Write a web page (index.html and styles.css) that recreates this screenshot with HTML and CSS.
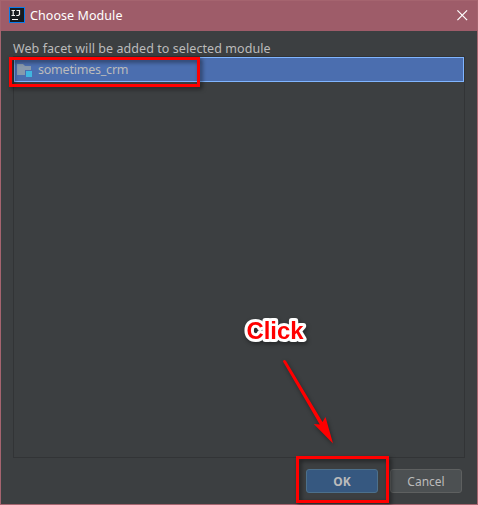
FILE: index.html
```html
<!DOCTYPE html>
<html lang="en">
<head>
<meta charset="utf-8">
<title>Choose Module</title>
<link rel="stylesheet" href="styles.css">
</head>
<body>
<div class="dialog">
  <header class="titlebar">
    <svg class="app-icon" width="16" height="16" viewBox="0 0 16 16">
      <rect x=".5" y=".5" width="15" height="15" fill="#161a1f" stroke="#087cec"/>
      <path d="M2.5 3.5H6M4.2 3.5V8.5M2.5 8.5H6M7.5 3.5H10.5V7.5L9.5 8.5H7.3M3 12.5H9" fill="none" stroke="#f2f2f2" stroke-width="1.2"/>
    </svg>
    <h1 class="title">Choose Module</h1>
    <svg class="close" width="11" height="11" viewBox="0 0 11 11"><path d="M.4.4l9.7 9.7M10.1.4L.4 10.1" stroke="#fff" stroke-width="1.2"/></svg>
  </header>
  <main class="content">
    <p class="hint">Web facet will be added to selected module</p>
    <div class="list">
      <div class="row">
        <svg class="folder" width="16" height="14" viewBox="0 0 16 14">
          <path d="M0 0H6L8 2H14V11H0Z" fill="#8799ac"/>
          <path d="M8 6H15V14H8Z" fill="#4b6eaf"/>
          <path d="M9 7H15V13H9Z" fill="#40b6e0"/>
        </svg>
        <span class="module">sometimes_crm</span>
      </div>
    </div>
    <footer class="actions">
      <button class="button primary">OK</button>
      <button class="button">Cancel</button>
    </footer>
  </main>
</div>
<div class="mark mark-module"></div>
<div class="mark mark-ok"></div>
<svg class="annotation" width="478" height="505" viewBox="0 0 478 505">
  <text class="click" x="246.5" y="339" textLength="57" lengthAdjust="spacingAndGlyphs">Click</text>
  <path class="arrow" d="M283 361.5Q284 359 286 361L322.5 422L325.5 417L333 443.5L313.8 424L319.8 424.5Z"/>
</svg>
</body>
</html>
```
FILE: styles.css
```css
* { box-sizing: border-box; }
body { margin: 0; overflow: hidden; font-family: "Noto Sans", sans-serif; }
.dialog {
  width: 478px; height: 505px;
  display: flex; flex-direction: column;
  border: 1px solid #a5646f;
  background: #3c3f41;
}
.titlebar {
  height: 30px; flex: none;
  display: flex; align-items: center;
  padding: 0 9px 0 8px;
  background: #9e5c69;
}
.app-icon { margin-top: -2px; }
.title { margin: 0 auto 0 5px; font-size: 12.5px; line-height: 20px; font-weight: 400; color: #fff; letter-spacing: .07px; }
.close { margin-top: -2px; }
.content { flex: 1; display: flex; flex-direction: column; padding: 8px 12px 10px; }
.hint { margin: 0; height: 17px; line-height: 19px; font-size: 12.5px; letter-spacing: .07px; color: #bbb; white-space: nowrap; }
.list { width: 452px; height: 402px; border: 1px solid #323436; }
.row {
  height: 25px; display: flex; align-items: center;
  padding-left: 2px;
  border: 1px solid #80b5ff;
  background: #4b6eaf;
}
.folder { margin-top: 3px; }
.module { margin: 1px 0 0 5px; font-size: 12.5px; line-height: 20px; letter-spacing: -.22px; color: #bbb; }
.actions { display: flex; justify-content: flex-end; gap: 12px; margin-top: 11px; padding-right: 3px; }
.button {
  width: 72px; height: 24px; padding: 1px 0 0;
  border: 1px solid #5e6060; border-radius: 3px;
  background: #4c5052; color: #bbb;
  font: 12px/21px "Noto Sans", sans-serif;
}
.primary { border-color: #4c708c; background: #365880; font-weight: 700; }
.mark { position: absolute; border: 3px solid #f00; filter: drop-shadow(2px 2px 2px rgba(0,0,0,.55)); }
.mark-module { left: 9px; top: 57px; width: 191px; height: 30px; }
.mark-ok { left: 296px; top: 456px; width: 93px; height: 47px; }
.annotation { position: absolute; left: 0; top: 0; pointer-events: none; filter: drop-shadow(1px 2px 2px rgba(0,0,0,.4)); }
.click {
  font: 700 24px "Liberation Sans", sans-serif;
  fill: #f00; stroke: #fff; stroke-width: 6px; stroke-linejoin: round; paint-order: stroke;
}
.arrow { fill: #f00; }
```
